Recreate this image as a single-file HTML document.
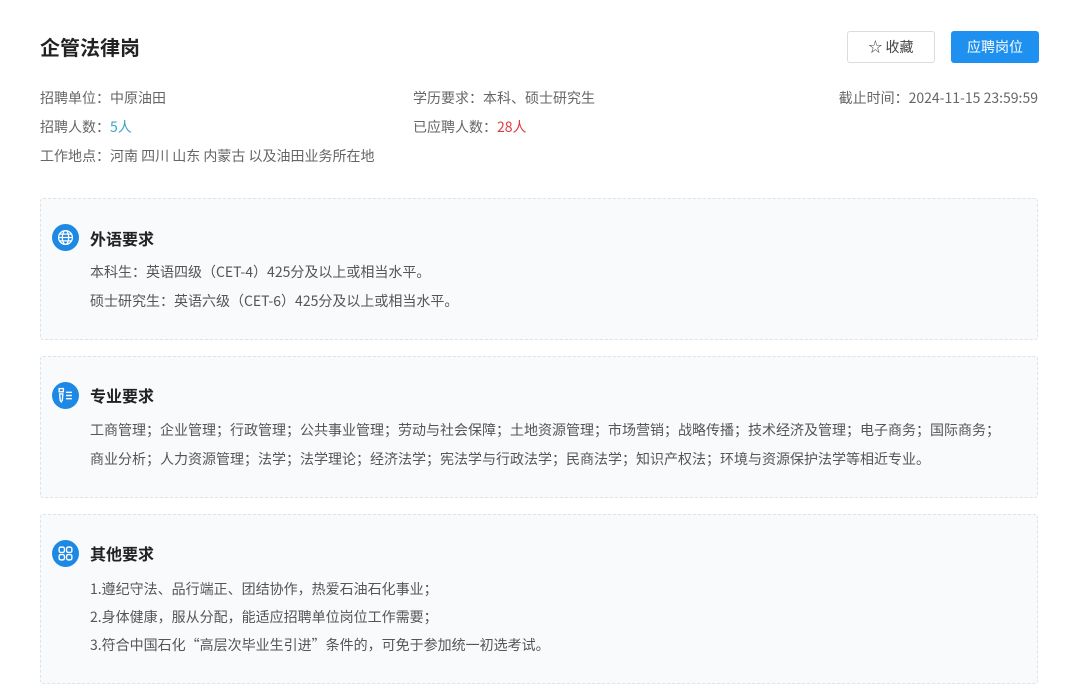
<!DOCTYPE html>
<html><head><meta charset="utf-8"><style>
*{margin:0;padding:0;box-sizing:border-box}
body{width:1078px;height:685px;background:#fff;font-family:"Noto Sans CJK SC","Liberation Sans",sans-serif;color:#666;position:relative;overflow:hidden}
.abs{position:absolute;white-space:nowrap}
h1{position:absolute;left:40px;top:33px;font-size:20px;font-weight:bold;color:#222;line-height:28px}
.info{font-size:14px;color:#666;line-height:20px}
.btn{position:absolute;top:31px;height:32px;width:88px;border-radius:3px;font-size:14px;line-height:30px;text-align:center}
.box{position:absolute;left:40px;width:998px;border:1px dashed #dde3ea;border-radius:3px;background:#f8fafc}
.ic{position:absolute;left:11px;width:27px;height:27px;border-radius:50%;background:#1e88e5}
.ic svg{position:absolute;left:5px;top:5px}
.hd{position:absolute;left:49px;font-size:16px;font-weight:bold;color:#222;line-height:22px}
.ln{position:absolute;left:49px;font-size:14px;color:#555;line-height:20px;white-space:nowrap}
</style></head><body>
<h1>企管法律岗</h1>
<div class="btn" style="left:847px;border:1px solid #dcdcdc;color:#444;background:#fff">☆ 收藏</div>
<div class="btn" style="left:951px;background:#1e90f0;color:#fff;border:1px solid #1e90f0">应聘岗位</div>
<div class="abs info" style="left:40px;top:88px">招聘单位：中原油田</div>
<div class="abs info" style="left:413px;top:88px">学历要求：本科、硕士研究生</div>
<div class="abs info" style="right:40px;top:88px">截止时间：2024-11-15 23:59:59</div>
<div class="abs info" style="left:40px;top:117px">招聘人数：<span style="color:#3aa3c7">5人</span></div>
<div class="abs info" style="left:413px;top:117px">已应聘人数：<span style="color:#e0393e">28人</span></div>
<div class="abs info" style="left:40px;top:146px">工作地点：河南 四川 山东 内蒙古 以及油田业务所在地</div>

<div class="box" style="top:198px;height:142px">
<div class="ic" style="top:25px"><svg width="17" height="17" viewBox="0 0 16 16" fill="none" stroke="#fff" stroke-width="1.2"><circle cx="8" cy="8" r="6.5"/><ellipse cx="8" cy="8" rx="3" ry="6.5"/><path d="M1.5 8h13M2.5 4.8h11M2.5 11.2h11"/></svg></div>
<div class="hd" style="top:28px">外语要求</div>
<div class="ln" style="top:63px">本科生：英语四级（CET-4）425分及以上或相当水平。</div>
<div class="ln" style="top:92px">硕士研究生：英语六级（CET-6）425分及以上或相当水平。</div>
</div>

<div class="box" style="top:356px;height:142px">
<div class="ic" style="top:25px"><svg width="17" height="17" viewBox="0 0 16 16" fill="none" stroke="#fff" stroke-width="1.3"><rect x="2" y="1.5" width="4" height="3"/><path d="M2.5 6.5h3l-.5 6-1 1.5-1-1.5z"/><path d="M8.5 5h5.5M8.5 8h5.5M8.5 11h5.5"/></svg></div>
<div class="hd" style="top:27px">专业要求</div>
<div class="ln" style="top:63px">工商管理；企业管理；行政管理；公共事业管理；劳动与社会保障；土地资源管理；市场营销；战略传播；技术经济及管理；电子商务；国际商务；</div>
<div class="ln" style="top:92px">商业分析；人力资源管理；法学；法学理论；经济法学；宪法学与行政法学；民商法学；知识产权法；环境与资源保护法学等相近专业。</div>
</div>

<div class="box" style="top:514px;height:170px">
<div class="ic" style="top:25px"><svg width="17" height="17" viewBox="0 0 16 16" fill="none" stroke="#fff" stroke-width="1.3"><rect x="2" y="2" width="5" height="5" rx="1.5"/><rect x="9" y="2" width="5" height="5" rx="1.5"/><rect x="2" y="9" width="5" height="5" rx="1.5"/><rect x="9" y="9" width="5" height="5" rx="1.5"/></svg></div>
<div class="hd" style="top:27px">其他要求</div>
<div class="ln" style="top:64px">1.遵纪守法、品行端正、团结协作，热爱石油石化事业；</div>
<div class="ln" style="top:92px">2.身体健康，服从分配，能适应招聘单位岗位工作需要；</div>
<div class="ln" style="top:120px">3.符合中国石化“高层次毕业生引进”条件的，可免于参加统一初选考试。</div>
</div>
</body></html>
